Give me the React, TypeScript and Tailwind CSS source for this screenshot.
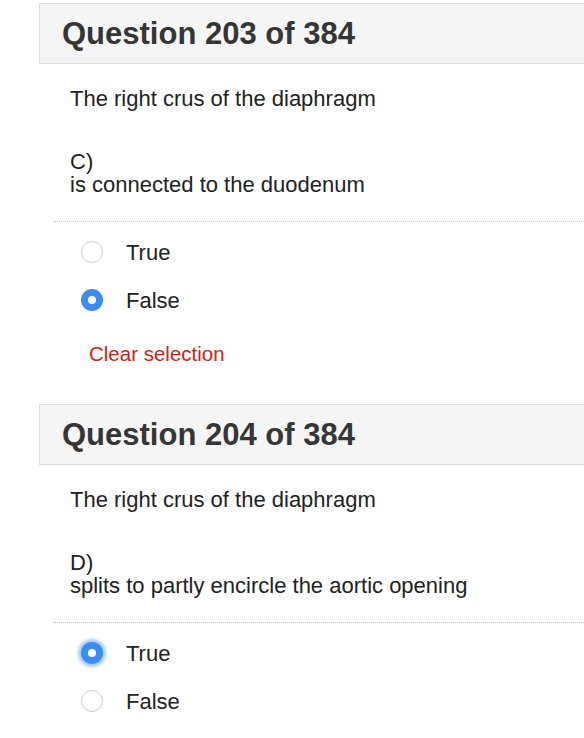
import React from "react";

type Option = { label: string; checked: boolean; focused?: boolean };

type Question = {
    num: number;
    stem: string;
    letter: string;
    statement: string;
    options: Option[];
};

const questions: Question[] = [
    {
        num: 203,
        stem: "The right crus of the diaphragm",
        letter: "C)",
        statement: "is connected to the duodenum",
        options: [
            { label: "True", checked: false },
            { label: "False", checked: true },
        ],
    },
    {
        num: 204,
        stem: "The right crus of the diaphragm",
        letter: "D)",
        statement: "splits to partly encircle the aortic opening",
        options: [
            { label: "True", checked: true, focused: true },
            { label: "False", checked: false },
        ],
    },
];

const Radio = ({ checked, focused }: { checked: boolean; focused?: boolean }) => {
    if (checked) {
        return (
            <span
                className={`flex h-[22px] w-[22px] shrink-0 items-center justify-center rounded-full bg-[#3a8df5] ${
                    focused ? "shadow-[0_0_3px_3px_rgba(58,141,245,0.45)]" : ""
                }`}
            >
                <span className="h-[8px] w-[8px] rounded-full bg-white" />
            </span>
        );
    }
    return <span className="h-[22px] w-[22px] shrink-0 rounded-full border-[1.5px] border-[#cfcfcf] bg-white" />;
};

const QuestionBlock = ({ q }: { q: Question }) => {
    return (
        <div className="pb-[38px]">
            {/* header */}
            <div className="ml-[39px] flex h-[61px] items-center border border-r-0 border-[#dcdcdc] bg-[#f5f5f5] pl-[22px]">
                <h2 className="text-[31px] font-bold leading-none text-[#363636]">
                    Question {q.num} of 384
                </h2>
            </div>

            {/* stem */}
            <div className="pl-[70px] pt-[23px] text-[22px] leading-[23px] text-[#222]">
                <p>{q.stem}</p>
                <p className="mt-[40px]">{q.letter}</p>
                <p>{q.statement}</p>
            </div>

            <div className="ml-[54px] mt-[25px] border-t border-dotted border-[#c4c4c4]" />

            {/* answers */}
            <div className="mt-[18px] flex flex-col gap-[24px] pl-[81px]">
                {q.options.map((o) => (
                    <label key={o.label} className="flex h-[24px] items-center gap-[23px] text-[22px] text-[#222]">
                        <Radio checked={o.checked} focused={o.focused} />
                        <span>{o.label}</span>
                    </label>
                ))}
            </div>

            <div className="mt-[30px] pl-[89px] text-[20.5px] leading-[24px] text-[#d4220f]">Clear selection</div>
        </div>
    );
};

export default function App() {
    return (
        <div className="min-h-screen bg-white pt-[3px] font-['Liberation_Sans',Arial,sans-serif]">
            {questions.map((q) => (
                <QuestionBlock key={q.num} q={q} />
            ))}
        </div>
    );
}
